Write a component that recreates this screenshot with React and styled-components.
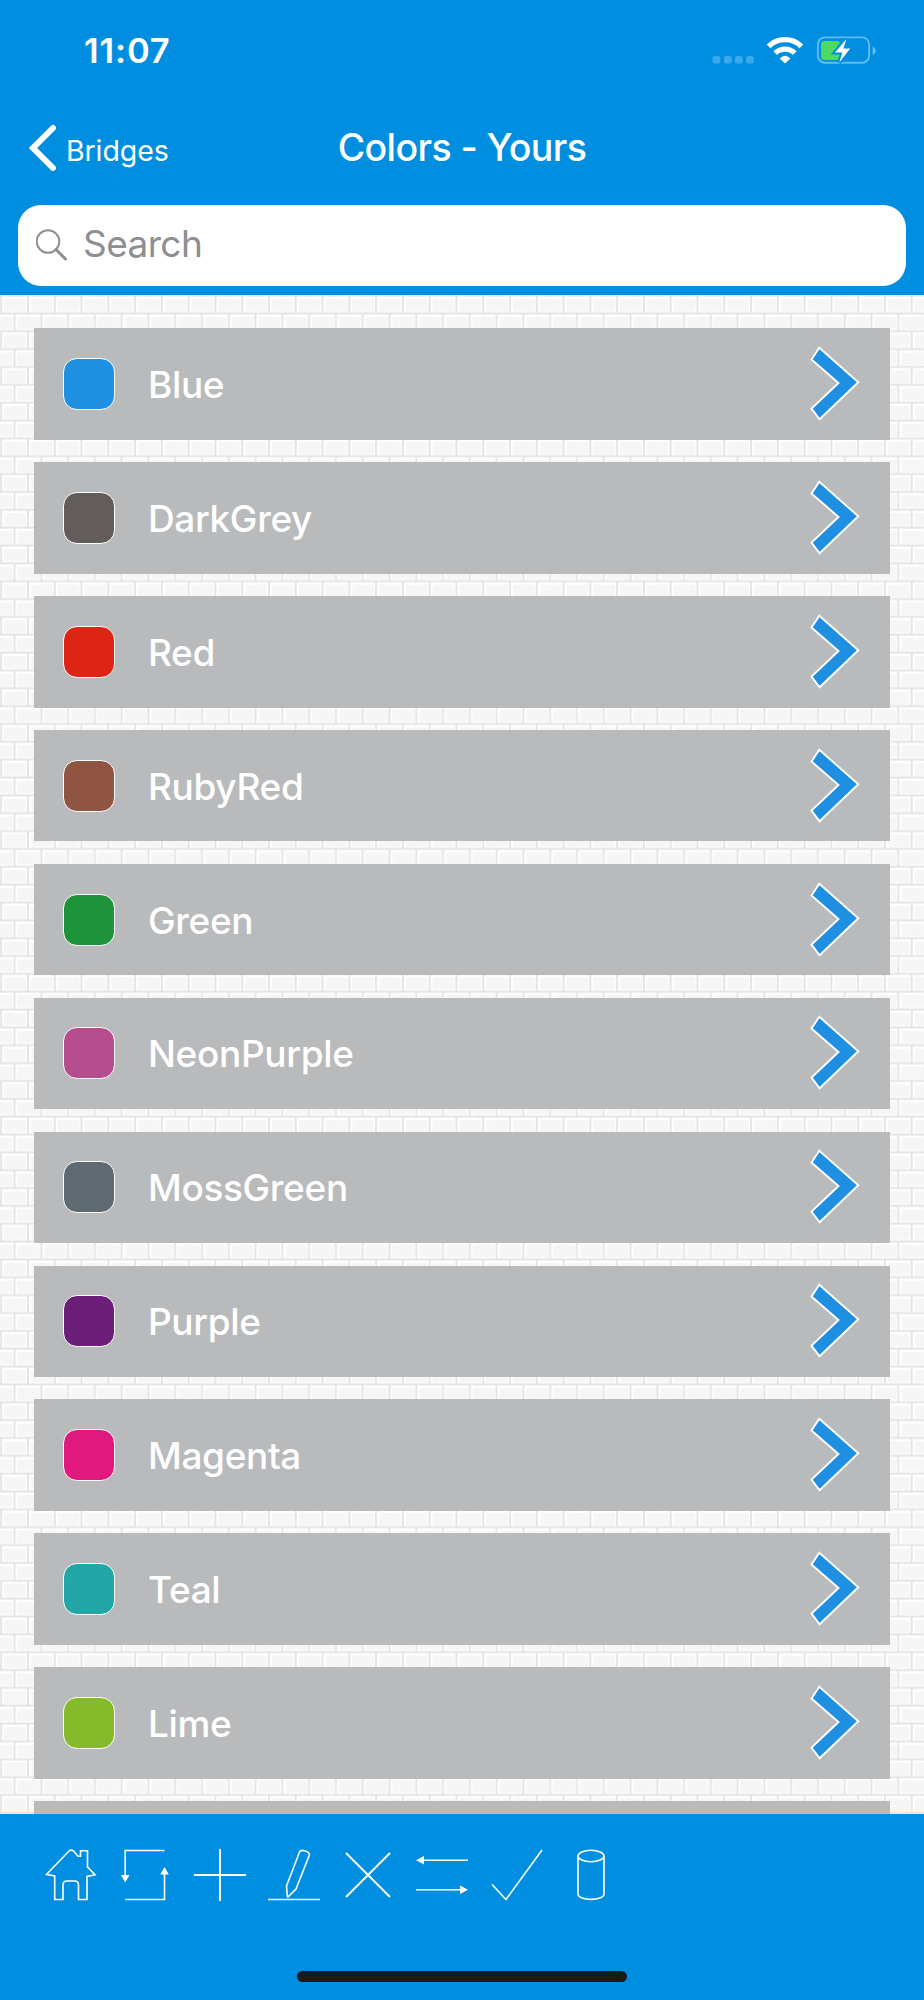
import React, { useState } from "react";
import styled, { createGlobalStyle } from "styled-components";

const GlobalStyle = createGlobalStyle`
  * {
    box-sizing: border-box;
  }
  body {
    margin: 0;
    background: #008fe0;
    font-family: Inter, "Liberation Sans", sans-serif;
  }
`;

const Screen = styled.div`
  display: flex;
  flex-direction: column;
  width: 924px;
  height: 2000px;
  background: #008fe0;
  overflow: hidden;
`;

const StatusBar = styled.div`
  display: flex;
  align-items: center;
  justify-content: space-between;
  height: 102px;
  padding: 0 48px 0 84px;
  flex-shrink: 0;
`;

const Time = styled.div`
  font-size: 34.5px;
  font-weight: 600;
  line-height: 40px;
  letter-spacing: 0.9px;
  color: #fff;
`;

const StatusIcons = styled.svg`
  width: 164px;
  height: 32px;
`;

const NavBar = styled.div`
  display: grid;
  grid-template-columns: 1fr auto 1fr;
  align-items: center;
  height: 93px;
  padding: 0 28px 2px;
  flex-shrink: 0;
`;

const BackButton = styled.button`
  display: flex;
  align-items: center;
  gap: 10px;
  padding: 0;
  border: none;
  background: none;
  font-family: inherit;
  font-size: 28.5px;
  line-height: 36px;
  letter-spacing: -0.1px;
  color: #fff;

  span {
    padding-top: 7px;
  }
`;

const Title = styled.div`
  font-size: 37.5px;
  font-weight: 500;
  line-height: 48px;
  letter-spacing: -0.6px;
  color: #fff;
`;

const SearchBar = styled.label`
  display: flex;
  align-items: center;
  gap: 15px;
  height: 80.5px;
  margin: 10.2px 18px 9px;
  padding: 0 18px;
  border-radius: 23px;
  background: #fff;
  flex-shrink: 0;
`;

const SearchInput = styled.input`
  flex: 1;
  padding: 0 0 3px;
  border: none;
  outline: none;
  background: none;
  font-family: inherit;
  font-size: 37px;
  letter-spacing: -0.6px;
  color: #222;

  &::placeholder {
    color: #8e8e93;
    opacity: 1;
  }
`;

const Wall = styled.div`
  position: relative;
  height: 1519.5px;
  overflow: hidden;
  flex-shrink: 0;
`;

const Bricks = styled.svg`
  position: absolute;
  inset: 0;
  width: 100%;
  height: 100%;
`;

const List = styled.div`
  position: relative;
  display: flex;
  flex-direction: column;
  gap: 22.33px;
  padding: 33.4px 34px 0;
`;

const Row = styled.div`
  display: flex;
  align-items: center;
  height: 111.6px;
  padding: 0 30px 0 29.2px;
  background: #b8babc;
  flex-shrink: 0;
`;

const Swatch = styled.div`
  width: 52px;
  height: 52px;
  border: 1.2px solid #fff;
  border-radius: 14px;
  background: ${({ $color }) => $color};
`;

const RowLabel = styled.div`
  flex: 1;
  margin-left: 32.8px;
  padding-top: 2px;
  font-size: 37px;
  font-weight: 500;
  line-height: 46px;
  letter-spacing: -0.35px;
  color: #fff;
`;

const Toolbar = styled.div`
  display: flex;
  gap: 22.3px;
  padding: 35px 0 0 45px;
  height: 157px;
  flex-shrink: 0;
`;

const ToolButton = styled.button`
  width: 52px;
  height: 52px;
  padding: 0;
  border: none;
  background: none;
  color: #fff;

  svg {
    display: block;
    overflow: visible;
  }
`;

const HomeIndicator = styled.div`
  width: 330px;
  height: 11px;
  margin: 0 auto;
  border-radius: 6px;
  background: #1a1a1a;
`;

const colors = [
  { name: "Blue", value: "#1e8fe1" },
  { name: "DarkGrey", value: "#625d5b" },
  { name: "Red", value: "#dd2515" },
  { name: "RubyRed", value: "#8f5542" },
  { name: "Green", value: "#1f933b" },
  { name: "NeonPurple", value: "#b64d8f" },
  { name: "MossGreen", value: "#5f6970" },
  { name: "Purple", value: "#6b1f78" },
  { name: "Magenta", value: "#e0197e" },
  { name: "Teal", value: "#22a6a6" },
  { name: "Lime", value: "#85bb2b" },
];

const tools = [
  {
    name: "Home",
    icon: (
      <path d="M1.5 25.5 L24 2 Q26 .3 28.5 2 L33 7.2 H35.5 V1.8 H42.5 V18 L50 25.7 L42 27.5 V50.5 H33.5 V36 Q33.5 32 29.5 32 H22 Q18 32 18 36 V50.5 H9.7 V27 Z" />
    ),
  },
  {
    name: "Refresh",
    icon: (
      <>
        <path d="M45.5 1.5 H6.2 V30 M6.2 50.5 H45.5 V22" />
        <path d="M2 26 H10.5 L6.2 33.5 Z M41.2 25.5 H49.8 L45.5 18 Z" fill="currentColor" stroke="none" />
      </>
    ),
  },
  { name: "Add", icon: <path d="M0 26 H52 M26 0 V52" strokeWidth="1.9" /> },
  {
    name: "Edit",
    icon: <path d="M0 50.5 H52 M19.5 48.5 L18.5 37 L31.5 3 Q33 .4 36.5 1.8 Q41 3 41.5 5.7 L28 40 L19.5 48.5" />,
  },
  { name: "Delete", icon: <path d="M4 4 L48 48 M48 4 L4 48" strokeWidth="1.9" /> },
  {
    name: "Swap",
    icon: (
      <>
        <path d="M5 11.3 H52 M0 40.7 H47" />
        <path d="M0 11.3 L8 7 V15.6 Z M52 40.7 L44 36.4 V45 Z" fill="currentColor" stroke="none" />
      </>
    ),
  },
  { name: "Confirm", icon: <path d="M1 35.5 L15 50.5 L51 1" /> },
  {
    name: "Storage",
    icon: (
      <>
        <ellipse cx="26" cy="7" rx="13" ry="5.7" />
        <path d="M13 7 V45 C13 52.2 39 52.2 39 45 V7" />
      </>
    ),
  },
];

const BrickWall = () => (
  <Bricks>
    <defs>
      <filter id="plaster" x="0" y="0" width="100%" height="100%">
        <feTurbulence type="fractalNoise" baseFrequency="0.22" numOctaves="2" seed="4" />
        <feColorMatrix values="0 0 0 0 .88  0 0 0 0 .88  0 0 0 0 .88  1.3 0 0 0 -.42" />
      </filter>
      <pattern id="bricks" width="26.78" height="35.7" patternUnits="userSpaceOnUse" x="1.2" y="0">
        <rect width="26.78" height="35.7" fill="#e3e3e3" />
        <rect x=".9" y="1.5" width="24.9" height="15.9" fill="#fff" />
        <rect x="2.9" y="4" width="22" height="12.3" rx="1.5" fill="#f6f6f6" />
        <rect x="-12.5" y="19.4" width="24.9" height="15.9" fill="#fff" />
        <rect x="14.3" y="19.4" width="24.9" height="15.9" fill="#fff" />
        <rect x="-10.5" y="21.9" width="22" height="12.3" rx="1.5" fill="#f6f6f6" />
        <rect x="16.3" y="21.9" width="22" height="12.3" rx="1.5" fill="#f6f6f6" />
      </pattern>
    </defs>
    <rect width="100%" height="100%" fill="url(#bricks)" />
    <rect width="100%" height="100%" filter="url(#plaster)" opacity=".22" />
  </Bricks>
);

const Chevron = () => (
  <svg width="50" height="76" viewBox="0 0 50 76">
    <path
      d="M9.3 1.8 L48.3 36.3 L9.6 73.3 L1.5 62.5 L28.5 37 L1.5 13.5 Z"
      fill="#1e8fe1"
      stroke="#fff"
      strokeWidth="1.9"
    />
  </svg>
);

function App() {
  const [query, setQuery] = useState("");

  const visible = colors.filter((c) => c.name.toLowerCase().includes(query.toLowerCase()));

  return (
    <>
      <GlobalStyle />
      <Screen>
        <StatusBar>
          <Time>11:07</Time>
          <StatusIcons viewBox="712 35 164 32">
            <g fill="#fff" opacity=".23">
              <rect x="712.5" y="56" width="7.8" height="7.5" rx="2.3" />
              <rect x="724" y="56" width="7.8" height="7.5" rx="2.3" />
              <rect x="735" y="56" width="7.8" height="7.5" rx="2.3" />
              <rect x="746" y="56" width="7.8" height="7.5" rx="2.3" />
            </g>
            <g fill="none" stroke="#fff" strokeWidth="5.2">
              <path d="M768.6 46.4 A23.4 23.4 0 0 1 801.4 46.4" />
              <path d="M775.2 53.2 A14 14 0 0 1 794.8 53.2" />
            </g>
            <path d="M779.7 58.5 Q785 53.2 790.5 58.5 L785.6 63 Q785 63.4 784.5 63 Z" fill="#fff" />
            <rect x="817.9" y="37.4" width="51.2" height="25.4" rx="7" fill="none" stroke="#66bbed" strokeWidth="1.9" />
            <path d="M872.6 46 Q875.7 48 875.7 50.5 Q875.7 53.5 872.6 55 Z" fill="#66bbed" />
            <path d="M825 41 H836.5 Q839 41 840.3 42.2 L832.8 53.8 H841 L838.8 60 H825 Q821 60 821 56.5 V44.5 Q821 41 825 41 Z" fill="#4cd964" />
            <path d="M846.5 39 L835 52.4 H842.3 L839.3 62.5 L850.2 48.6 H843.3 Z" fill="#fff" stroke="#008fe0" strokeWidth="4" paintOrder="stroke" />
          </StatusIcons>
        </StatusBar>
        <NavBar>
          <BackButton>
            <svg width="28" height="48" viewBox="0 0 28 48" fill="none" stroke="#fff" strokeWidth="6" strokeLinecap="round">
              <path d="M25 4 L5 24 L25 44" />
            </svg>
            <span>Bridges</span>
          </BackButton>
          <Title>Colors - Yours</Title>
        </NavBar>
        <SearchBar>
          <svg width="32" height="34" viewBox="0 0 32 34" fill="none" stroke="#8e8e93">
            <circle cx="12" cy="13.5" r="11.3" strokeWidth="2" />
            <path d="M20 21.5 L29.5 31" strokeWidth="3" strokeLinecap="round" />
          </svg>
          <SearchInput placeholder="Search" value={query} onChange={(e) => setQuery(e.target.value)} />
        </SearchBar>
        <Wall>
          <BrickWall />
          <List>
            {visible.map((color) => (
              <Row key={color.name}>
                <Swatch $color={color.value} />
                <RowLabel>{color.name}</RowLabel>
                <Chevron />
              </Row>
            ))}
            <Row />
          </List>
        </Wall>
        <Toolbar>
          {tools.map((tool) => (
            <ToolButton key={tool.name} aria-label={tool.name}>
              <svg width="52" height="52" viewBox="0 0 52 52" fill="none" stroke="currentColor" strokeWidth="1.6">
                {tool.icon}
              </svg>
            </ToolButton>
          ))}
        </Toolbar>
        <HomeIndicator />
      </Screen>
    </>
  );
}

export default App;
